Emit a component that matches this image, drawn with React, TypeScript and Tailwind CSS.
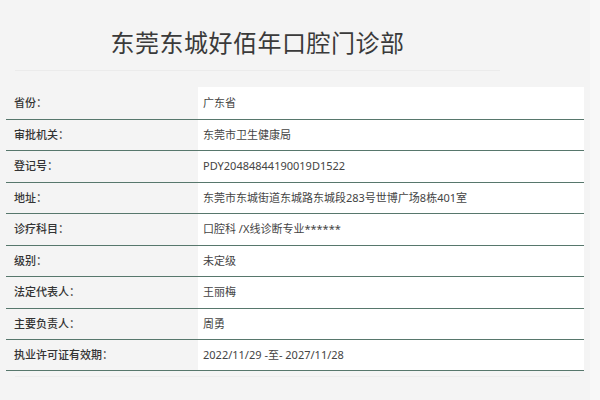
const rows: [string, string][] = [
  ['省份：', '广东省'],
  ['审批机关：', '东莞市卫生健康局'],
  ['登记号：', 'PDY20484844190019D1522'],
  ['地址：', '东莞市东城街道东城路东城段283号世博广场8栋401室'],
  ['诊疗科目：', '口腔科 /X线诊断专业******'],
  ['级别：', '未定级'],
  ['法定代表人：', '王丽梅'],
  ['主要负责人：', '周勇'],
  ['执业许可证有效期：', '2022/11/29 -至- 2027/11/28'],
];

export default function App() {
  return (
    <div
      className="w-[600px] h-[400px] overflow-hidden bg-[#f4f4f4] flex"
      style={{ fontFamily: '"Noto Sans", "Noto Sans CJK SC", sans-serif' }}
    >
      <div className="w-[590px] flex flex-col">
        <div className="mx-[15px] w-[485px] h-[71px] border-b border-[#ebebeb] flex items-center justify-center pt-[15px]">
          <h1 className="text-[24px] text-[#3a3a3a] tracking-[0.5px]">东莞东城好佰年口腔门诊部</h1>
        </div>
        <div className="mt-[16px] ml-[6px] w-[578px] flex flex-col">
          {rows.map(([k, v], i) => (
            <div
              key={k}
              className={`flex h-[31.5px] ${i > 0 ? 'border-t-[1.5px] border-[#57776c]' : ''} ${i === rows.length - 1 ? 'border-b-[1.5px] border-[#57776c]' : ''}`}
            >
              <div className="w-[192px] flex items-center pl-[8px] text-[11px] font-medium text-[#333]">{k}</div>
              <div className="flex-1 bg-white flex items-center pl-[5px] text-[11px] text-[#444]">{v}</div>
            </div>
          ))}
        </div>
        <div className="mt-[5px] ml-[15px] w-[555px] h-px bg-[#ececec]" />
      </div>
      <div className="flex-1 bg-[#f8f8f8]" />
    </div>
  );
}
